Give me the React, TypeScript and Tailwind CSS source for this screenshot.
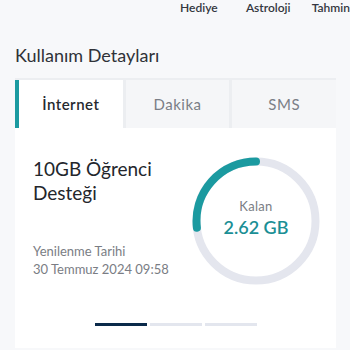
import React from "react";

const font = { fontFamily: "Lato, 'Noto Sans', sans-serif" };

function UsageRing() {
  return (
    <div className="relative h-[128px] w-[128px] shrink-0">
      <svg viewBox="0 0 128 128" className="h-full w-full">
        <circle cx="64" cy="64" r="59.5" fill="none" stroke="#e4e6ee" strokeWidth="8" />
        <path
          d="M64 4.5 A59.5 59.5 0 0 0 4.9 70.7"
          fill="none"
          stroke="#1b9aa0"
          strokeWidth="8"
          strokeLinecap="round"
        />
      </svg>
      <div className="absolute inset-0 flex flex-col items-center justify-center pb-[6px]">
        <span className="text-[13px] leading-[18px] tracking-[0.3px] text-[#7a7d84]">Kalan</span>
        <span className="text-[18px] font-semibold leading-[24px] text-[#1b8f95]">2.62 GB</span>
      </div>
    </div>
  );
}

export default function App() {
  const tabs = ["İnternet", "Dakika", "SMS"];

  return (
    <div className="h-[350px] w-[350px] overflow-hidden bg-[#f7f8fa]" style={font}>
      <div className="flex h-[16px] items-start pl-[180px] pt-[1px] text-[12px] font-semibold leading-[14px] text-[#333740]">
        <span className="w-[73px]">Hediye</span>
        <span className="w-[73px]">Astroloji</span>
        <span>Tahmin</span>
      </div>

      <h2 className="mt-[27px] pl-[15px] text-[18px] leading-[24px] text-[#2f3238]">Kullanım Detayları</h2>

      <div className="mx-[15px] mt-[11px] w-[321px]">
        <div className="flex h-[50px] border-t-2 border-[#eceef1] bg-[#eceef1]">
          {tabs.map((t, i) => (
            <div
              key={t}
              className={
                i === 0
                  ? "flex flex-1 items-center justify-center border-l-[4px] border-[#1b9aa0] bg-white text-[15px] font-semibold tracking-[0.5px] text-[#26292f]"
                  : "ml-[3px] flex flex-1 items-center justify-center bg-[#f5f6f8] text-[15px] tracking-[0.5px] text-[#7a7e86]"
              }
            >
              {t}
            </div>
          ))}
        </div>

        <div className="h-[220px] bg-white pt-[29px]">
          <div className="flex items-start pl-[18px] pr-[16px]">
            <div className="flex-1">
              <div className="text-[19px] leading-[24px] text-[#23262c]">
                10GB Öğrenci
                <br />
                Desteği
              </div>
              <div className="mt-[37px] text-[13px] leading-[18px] text-[#7a7d84]">
                <div>Yenilenme Tarihi</div>
                <div>30 Temmuz 2024 09:58</div>
              </div>
            </div>
            <UsageRing />
          </div>

          <div className="mt-[38px] flex justify-center gap-[3px]">
            <div className="h-[3px] w-[52px] bg-[#0b2a4a]" />
            <div className="h-[3px] w-[52px] bg-[#e3e6ee]" />
            <div className="h-[3px] w-[52px] bg-[#e3e6ee]" />
          </div>
        </div>
      </div>
    </div>
  );
}
